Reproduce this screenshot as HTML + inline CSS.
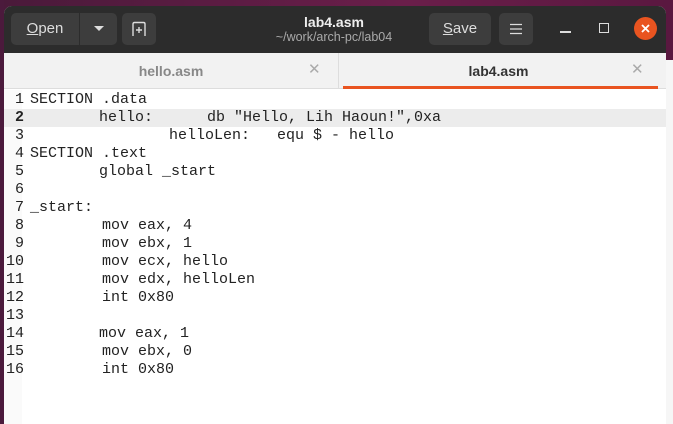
<!DOCTYPE html><html><head><style>
*{margin:0;padding:0;box-sizing:border-box}
body{width:673px;height:424px;overflow:hidden;background:#f4f4f4;font-family:"Liberation Sans",sans-serif;position:relative}
.bg{position:absolute;left:0;top:0;width:673px;height:60px;background:linear-gradient(90deg,#4a1a3a,#6a1e4a 60%,#5a1840)}
.lb{position:absolute;left:0;top:0;width:4px;height:424px;background:#4b1a3c}
.win{position:absolute;left:4px;top:6px;width:662px;height:418px;background:#fff;border-radius:8px 8px 0 0;overflow:hidden}
.hdr{position:absolute;left:0;top:0;width:662px;height:47px;background:#2c2c2c}
.btn{position:absolute;top:7px;height:32px;background:#3d3d3d;border-radius:5px;color:#ddd;font-size:15px;line-height:32px;text-align:center}
.tabs{position:absolute;left:0;top:47px;width:662px;height:36px;background:#f2f2f2;border-bottom:1px solid #ddd}
.tab{position:absolute;top:0;height:36px;line-height:36px;font-size:14px;font-weight:bold;text-align:center}
.x{position:absolute;top:0;line-height:34px;color:#aaa;font-size:15px}
.ed{position:absolute;left:0;top:84px;width:662px;height:340px;font-family:"Liberation Mono",monospace;font-size:15px;color:#222}
.gut{position:absolute;left:0;top:0;width:18px;height:340px;background:#fafafa}
.hl{position:absolute;left:0;top:19px;width:662px;height:18px;background:#ececec}
.l{position:absolute;white-space:pre;line-height:18px}
</style></head><body>
<div class="bg"></div><div class="lb"></div>
<div style="position:absolute;left:666px;top:60px;width:7px;height:364px;background:#f6f6f6"></div>
<div class="win">
<div class="hdr">
<div class="btn" style="left:7px;width:68px;border-radius:5px 0 0 5px"><u>O</u>pen</div>
<div class="btn" style="left:76px;width:37px;border-radius:0 5px 5px 0"><svg width="12" height="8" style="margin-top:12px"><path d="M1 1h10L6 6z" fill="#ddd"/></svg></div>
<div class="btn" style="left:118px;width:34px"><svg width="16" height="16" style="margin-top:8px"><path d="M2 15V3q0-1.5 1.5-1.5h9Q14 1.5 14 3v12" fill="none" stroke="#ddd" stroke-width="1.4"/><path d="M8 6v6M5 9h6" stroke="#ddd" stroke-width="1.4"/></svg></div>
<div style="position:absolute;left:270px;top:8px;width:120px;text-align:center;color:#eee;font-size:14px;font-weight:bold">lab4.asm</div>
<div style="position:absolute;left:250px;top:24px;width:160px;text-align:center;color:#aaa;font-size:12.5px">~/work/arch-pc/lab04</div>
<div class="btn" style="left:425px;width:62px"><u>S</u>ave</div>
<div class="btn" style="left:495px;width:34px"><svg width="14" height="12" style="margin-top:10px"><path d="M1 1.5h12M1 6h12M1 10.5h12" stroke="#ddd" stroke-width="1.3"/></svg></div>
<div style="position:absolute;left:556px;top:25px;width:11px;height:1.5px;background:#ddd"></div>
<div style="position:absolute;left:595px;top:17px;width:10px;height:10px;border:1.5px solid #ddd"></div>
<div style="position:absolute;left:630px;top:11px;width:23px;height:23px;border-radius:50%;background:#e95420"><svg width="23" height="23"><path d="M8 8l7 7M15 8l-7 7" stroke="#fff" stroke-width="1.8"/></svg></div>
</div>
<div class="tabs">
<div class="tab" style="left:0;width:334px;color:#888">hello.asm</div><div class="x" style="left:304px">✕</div>
<div style="position:absolute;left:334px;top:0;width:1px;height:36px;background:#ddd"></div>
<div class="tab" style="left:335px;width:319px;color:#333">lab4.asm</div><div class="x" style="left:627px">✕</div>
<div style="position:absolute;left:339px;top:33px;width:315px;height:3px;background:#e95420"></div>
</div>
<div class="ed">
<div class="gut"></div><div class="hl"></div>
<div class="l" style="left:11px;top:1px">1</div><div class="l" style="left:26px;top:1px">SECTION .data</div>
<div class="l" style="left:11px;top:19px;font-weight:bold">2</div><div class="l" style="left:95px;top:19px">hello:</div><div class="l" style="left:203px;top:19px">db "Hello, Lih Haoun!",0xa</div>
<div class="l" style="left:11px;top:37px">3</div><div class="l" style="left:165px;top:37px">helloLen:</div><div class="l" style="left:273px;top:37px">equ $ - hello</div>
<div class="l" style="left:11px;top:55px">4</div><div class="l" style="left:26px;top:55px">SECTION .text</div>
<div class="l" style="left:11px;top:73px">5</div><div class="l" style="left:95px;top:73px">global _start</div>
<div class="l" style="left:11px;top:91px">6</div>
<div class="l" style="left:11px;top:109px">7</div><div class="l" style="left:26px;top:109px">_start:</div>
<div class="l" style="left:11px;top:127px">8</div><div class="l" style="left:98px;top:127px">mov eax, 4</div>
<div class="l" style="left:11px;top:145px">9</div><div class="l" style="left:98px;top:145px">mov ebx, 1</div>
<div class="l" style="left:2px;top:163px">10</div><div class="l" style="left:98px;top:163px">mov ecx, hello</div>
<div class="l" style="left:2px;top:181px">11</div><div class="l" style="left:98px;top:181px">mov edx, helloLen</div>
<div class="l" style="left:2px;top:199px">12</div><div class="l" style="left:98px;top:199px">int 0x80</div>
<div class="l" style="left:2px;top:217px">13</div>
<div class="l" style="left:2px;top:235px">14</div><div class="l" style="left:95px;top:235px">mov eax, 1</div>
<div class="l" style="left:2px;top:253px">15</div><div class="l" style="left:98px;top:253px">mov ebx, 0</div>
<div class="l" style="left:2px;top:271px">16</div><div class="l" style="left:98px;top:271px">int 0x80</div>
</div>
</div>
</body></html>
